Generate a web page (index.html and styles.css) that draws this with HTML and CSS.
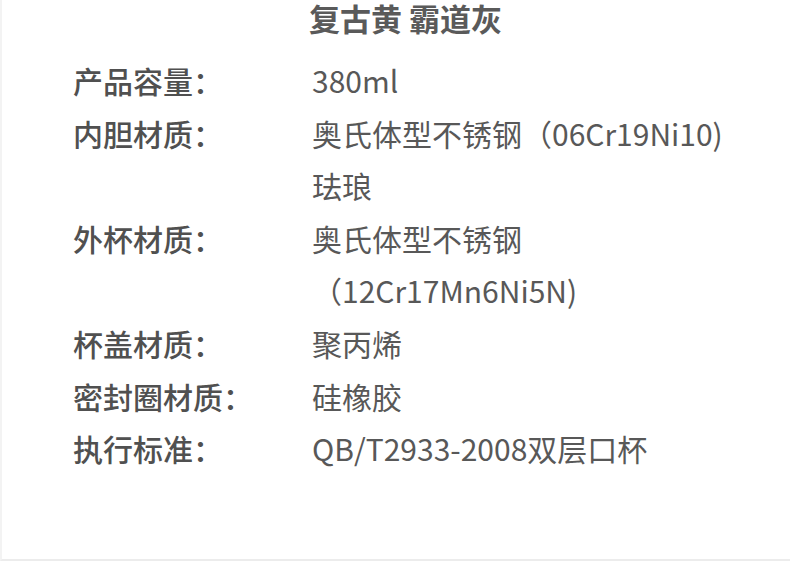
FILE: index.html
```html
<!DOCTYPE html>
<html lang="zh-CN">

<head>
    <meta charset="UTF-8">
    <meta name="viewport" content="width=device-width, initial-scale=1.0">
    <title>产品参数</title>
    <link rel="stylesheet" href="styles.css">
</head>

<body>
    <div class="page">
        <div class="title">复古黄 霸道灰</div>

        <div class="specs">
            <div class="label">产品容量：</div>
            <div class="value">380ml</div>

            <div class="label">内胆材质：</div>
            <div class="value">奥氏体型不锈钢（06Cr19Ni10)<br>珐琅</div>

            <div class="label">外杯材质：</div>
            <div class="value">奥氏体型不锈钢<br>（12Cr17Mn6Ni5N)</div>

            <div class="label">杯盖材质：</div>
            <div class="value">聚丙烯</div>

            <div class="label">密封圈材质：</div>
            <div class="value">硅橡胶</div>

            <div class="label">执行标准：</div>
            <div class="value">QB/T2933-2008双层口杯</div>
        </div>
    </div>
</body>

</html>
```

FILE: styles.css
```css
* {
    margin: 0;
    padding: 0;
    box-sizing: border-box;
}

body {
    background: #fff;
    font-family: "Noto Sans CJK SC", "Noto Sans", sans-serif;
    color: #555;
}

.page {
    width: 790px;
    height: 561px;
    border-left: 2px solid #f3f3f3;
    border-bottom: 2px solid #ececec;
    overflow: hidden;
}

.title {
    padding-top: 6px;
    padding-left: 307px;
    font-size: 31px;
    font-weight: bold;
    line-height: 24px;
    color: #5a5a5a;
}

.specs {
    display: grid;
    grid-template-columns: 239px 1fr;
    margin-top: 24px;
    padding-left: 71px;
    font-size: 30px;
    line-height: 52.6px;
}

.label {
    font-weight: 500;
    color: #505050;
}

.value {
    color: #585858;
}
```
